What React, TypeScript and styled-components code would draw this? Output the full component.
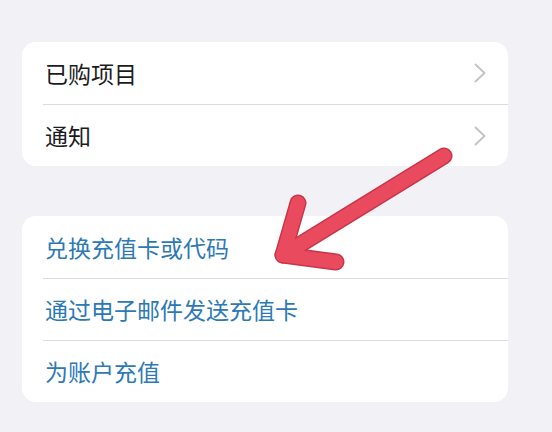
import React from "react";
import styled, { createGlobalStyle } from "styled-components";

const Global = createGlobalStyle`
  html, body { margin: 0; padding: 0; background: #f1f1f6; }
  body { font-family: "Noto Sans CJK SC", "Noto Sans", sans-serif; }
`;

const Page = styled.div`
  position: relative;
  width: 552px;
  height: 432px;
  overflow: hidden;
  background: #f1f1f6;
  padding: 42px 44px 0 22px;
  box-sizing: border-box;
  display: flex;
  flex-direction: column;
  gap: 50px;
`;

const Card = styled.div`
  background: #ffffff;
  border-radius: 14px;
  display: flex;
  flex-direction: column;
  overflow: hidden;
`;

const Row = styled.div<{ $first?: boolean }>`
  height: 62px;
  margin-left: 21px;
  padding-right: 22px;
  display: flex;
  align-items: center;
  justify-content: space-between;
  border-top: ${(p) => (p.$first ? "none" : "1px solid #dcdce0")};
  box-sizing: border-box;
`;

const Label = styled.span<{ $link?: boolean }>`
  font-size: 23px;
  line-height: 1;
  color: ${(p) => (p.$link ? "#2c79b6" : "#1c1c1e")};
  padding-left: 2px;
`;

const Overlay = styled.svg`
  position: absolute;
  left: 0;
  top: 0;
  pointer-events: none;
`;

const Chevron = () => (
  <svg width="12" height="20" viewBox="0 0 12 20">
    <path d="M1.5 1.5 L10.5 10 L1.5 18.5" fill="none" stroke="#c4c4c8" strokeWidth="2" strokeLinecap="round" strokeLinejoin="round" />
  </svg>
);

export default function App() {
  return (
    <>
      <Global />
      <Page>
        <Card>
          <Row $first>
            <Label>已购项目</Label>
            <Chevron />
          </Row>
          <Row>
            <Label>通知</Label>
            <Chevron />
          </Row>
        </Card>
        <Card>
          <Row $first>
            <Label $link>兑换充值卡或代码</Label>
          </Row>
          <Row>
            <Label $link>通过电子邮件发送充值卡</Label>
          </Row>
          <Row>
            <Label $link>为账户充值</Label>
          </Row>
        </Card>
        <Overlay width="552" height="432" viewBox="0 0 552 432">
          <g fill="none" strokeLinecap="round" strokeLinejoin="round">
            <g stroke="#c9364a" strokeWidth="17">
              <path d="M444 156 L283 255" />
              <path d="M298 203 L283 255 L336 262" />
            </g>
            <g stroke="#ea4a5e" strokeWidth="14">
              <path d="M444 156 L283 255" />
              <path d="M298 203 L283 255 L336 262" />
            </g>
          </g>
        </Overlay>
      </Page>
    </>
  );
}
